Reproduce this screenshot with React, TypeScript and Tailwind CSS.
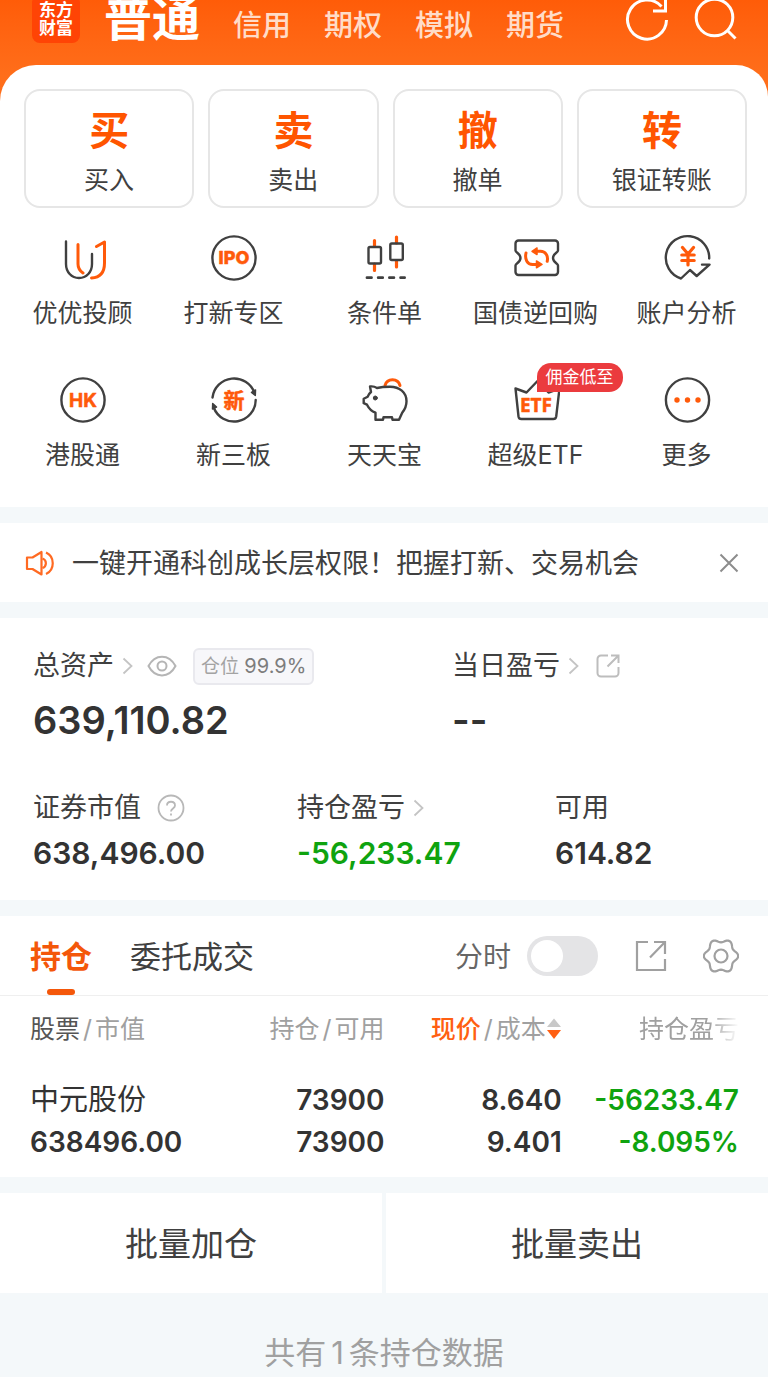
import React, { useState } from 'react';

const ORANGE = '#ff5a0a';
const DARK = '#404040';

const accountTabs = ['信用', '期权', '模拟', '期货'];

const actions = [
  { mark: '买', label: '买入' },
  { mark: '卖', label: '卖出' },
  { mark: '撤', label: '撤单' },
  { mark: '转', label: '银证转账' },
];

const holdings = [
  {
    name: '中元股份',
    marketValue: '638496.00',
    position: '73900',
    available: '73900',
    price: '8.640',
    cost: '9.401',
    profit: '-56233.47',
    profitRate: '-8.095%',
  },
];

function Icon({ children }: { children: React.ReactNode }) {
  return (
    <svg
      viewBox="0 0 48 48"
      className="size-12"
      fill="none"
      stroke={DARK}
      strokeWidth="2.4"
      strokeLinecap="round"
      strokeLinejoin="round"
      aria-hidden="true"
    >
      {children}
    </svg>
  );
}

function IconText({ y, className, children }: { y: number; className: string; children: string }) {
  return (
    <text x="24" y={y} textAnchor="middle" fill={ORANGE} stroke={ORANGE} strokeWidth="0.5" className={className}>
      {children}
    </text>
  );
}

function AdvisorIcon() {
  return (
    <Icon>
      <path d="M7 7.5V30c0 8 5.500 14 13 14s13-6 13-14V20" />
      <g stroke={ORANGE} strokeWidth="3">
        <path d="M19 10.500V30c0 4 2 7 5 9" />
        <path d="M37.500 12.500 45.500 8v21c0 9-4.500 14.500-13 15" />
      </g>
    </Icon>
  );
}

function IpoIcon() {
  return (
    <Icon>
      <circle cx="24" cy="24" r="21.600" />
      <IconText y={30} className="font-['Inter'] text-[18px] font-extrabold">IPO</IconText>
    </Icon>
  );
}

function ConditionIcon() {
  return (
    <Icon>
      <g stroke={ORANGE} strokeWidth="3.200">
        <path d="M13.500 6.500v6M13.500 30v6.500M35.500 3v6M35.500 27v6" />
      </g>
      <rect x="7.500" y="13" width="12.500" height="16.500" rx="1.500" />
      <rect x="29.300" y="9.500" width="12.500" height="16.500" rx="1.500" />
      <path d="M6 43.700h4.500M17.200 43.700h4.500M28.400 43.700h4.500M39.600 43.700h4" strokeWidth="2.800" />
    </Icon>
  );
}

function BondIcon() {
  return (
    <Icon>
      <path d="M6.500 6.500h36.500a3 3 0 0 1 3 3v7c0 2-5 3-5 7.500s5 5.500 5 7.500v6.500a3 3 0 0 1-3 3H6.500a3 3 0 0 1-3-3v-6.500c0-2 5-3 5-7.500s-5-5.500-5-7.500v-7a3 3 0 0 1 3-3z" />
      <g stroke={ORANGE} strokeWidth="3">
        <path d="M25 17.300h3.500c5 0 8 4.500 6.700 10" />
        <path d="M14 19c-1.500 6.500 1.500 11.400 6.500 11.400H24" />
        <path d="M25 14v6.600L20 17.300zM24.500 27v6.800l5.500-3.400z" fill={ORANGE} strokeWidth="1.500" />
      </g>
    </Icon>
  );
}

function AnalysisIcon() {
  return (
    <Icon>
      <path d="M46.200 24.500A21.700 21.700 0 1 0 18 44.500l9-8.500 6.700 6L46.500 30.600H39" />
      <g stroke={ORANGE} strokeWidth="3.200">
        <path d="M19.500 13.500 25 20l5.500-6.500M25 20v11M18.800 21h12.400M18.800 26.500h12.400" />
      </g>
    </Icon>
  );
}

function HkIcon() {
  return (
    <Icon>
      <circle cx="24" cy="24" r="21.600" />
      <IconText y={31} className="font-['Inter'] text-[19px] font-bold">HK</IconText>
    </Icon>
  );
}

function NewBoardIcon() {
  return (
    <Icon>
      <path d="M2.500 21.500A21.700 21.700 0 0 1 44.500 17" />
      <path d="M45.700 24A21.700 21.700 0 0 1 3.700 31.500" />
      <path d="M41.500 16.500 45.500 14l-.2 5.500zM6.500 31 2.500 33l.2-5.500z" fill={DARK} strokeWidth="1.500" />
      <IconText y={32} className="font-['Noto_Sans_CJK_SC'] text-[21px] font-bold">新</IconText>
    </Icon>
  );
}

function PiggyIcon() {
  return (
    <Icon>
      <path d="M24 9.500a7.800 7.800 0 0 1 15 0" stroke={ORANGE} strokeWidth="3" />
      <path d="M9 10.500c2.500-.3 5 .2 7 1.500 4-1 9-1.300 13-1.300 9.500 0 16.500 5.800 16.500 14.500 0 4.500-1.500 8-4.300 11.500L38 43.700h-6.500l-.5-2.500h-8.500l-.5 2.500h-7.500v-7c-4-1.500-6.500-4-8.500-8l-3.300-1.500v-4.500l4-2c.6-2 1.800-3.500 3.300-4.700z" />
      <circle cx="14.300" cy="22" r="2" fill={DARK} strokeWidth="1" />
    </Icon>
  );
}

function EtfIcon() {
  return (
    <Icon>
      <path d="M3.500 12.500 14.500 16.500 25.500 5l11 11.500 11-4-3.300 28a3 3 0 0 1-3 2.500H9.500a3 3 0 0 1-3-2.500z" />
      <IconText y={36} className="font-['Noto_Sans'] text-[19px] font-bold">ETF</IconText>
    </Icon>
  );
}

function MoreIcon() {
  return (
    <Icon>
      <circle cx="24.500" cy="24" r="21.600" />
      <g fill={ORANGE} stroke="none">
        <circle cx="14" cy="24" r="2.700" />
        <circle cx="24.500" cy="24" r="2.700" />
        <circle cx="35" cy="24" r="2.700" />
      </g>
    </Icon>
  );
}

const shortcuts = [
  { label: '优优投顾', icon: AdvisorIcon },
  { label: '打新专区', icon: IpoIcon },
  { label: '条件单', icon: ConditionIcon },
  { label: '国债逆回购', icon: BondIcon },
  { label: '账户分析', icon: AnalysisIcon },
  { label: '港股通', icon: HkIcon },
  { label: '新三板', icon: NewBoardIcon },
  { label: '天天宝', icon: PiggyIcon },
  { label: '超级ETF', icon: EtfIcon, badge: '佣金低至' },
  { label: '更多', icon: MoreIcon },
];

function Chevron() {
  return (
    <svg viewBox="0 0 12 20" className="h-5 w-3" fill="none" stroke="#c4c4c4" strokeWidth="1.800" aria-hidden="true">
      <path d="M1.500 2.500 9.500 10l-8 7.500" />
    </svg>
  );
}

// Six-lobed outline of the settings gear
const gearPath =
  Array.from({ length: 72 }, (_, i) => {
    const a = (i / 72) * Math.PI * 2;
    const r = 15.4 + 1.8 * Math.cos(6 * a);
    return `${i === 0 ? 'M' : 'L'}${(18 + r * Math.cos(a)).toFixed(2)} ${(18 + r * Math.sin(a)).toFixed(2)}`;
  }).join('') + 'Z';

function Header() {
  return (
    <header className="flex h-[65px] items-center pr-[31px] pb-7 pl-8">
      <div className="flex h-12 w-12 shrink-0 flex-col items-center justify-center rounded-lg bg-[#ff4405] text-[17px] leading-[18px] font-bold text-white">
        <span>东方</span>
        <span>财富</span>
      </div>
      <nav className="mt-1 ml-6 flex items-baseline gap-[33px] whitespace-nowrap">
        <a href="#normal" className="text-[48px] leading-10 font-bold text-white">普通</a>
        {accountTabs.map((tab) => (
          <a key={tab} href="#account" className="text-[29px] leading-8 font-medium text-[#ffdcc8]">
            {tab}
          </a>
        ))}
      </nav>
      <div className="ml-auto flex shrink-0 gap-6">
        <button type="button" aria-label="刷新">
          <svg viewBox="0 0 44 44" className="size-11" fill="none" stroke="#fff" strokeWidth="3">
            <path d="M36.500 9.500A19.500 19.500 0 1 0 41.500 23" />
            <path d="M40.500 1v13H28" />
          </svg>
        </button>
        <button type="button" aria-label="搜索">
          <svg viewBox="0 0 44 44" className="size-11" fill="none" stroke="#fff" strokeWidth="3">
            <circle cx="21.500" cy="20.500" r="18.300" />
            <path d="m34.500 33.500 8 8" />
          </svg>
        </button>
      </div>
    </header>
  );
}

function QuickPanel() {
  return (
    <section className="rounded-tl-[36px] rounded-tr-[32px] bg-white pt-6 pb-9">
      <div className="grid grid-cols-4 gap-[14px] pr-[21px] pl-6">
        {actions.map(({ mark, label }) => (
          <button
            key={mark}
            type="button"
            className="flex h-[119px] flex-col items-center rounded-2xl border-2 border-[#e6e6e6] pt-[14px]"
          >
            <span className="text-[40px] leading-[52px] font-bold text-[#ff5500]">{mark}</span>
            <span className="mt-[7px] text-[25px] leading-8">{label}</span>
          </button>
        ))}
      </div>
      <div className="mt-[26px] grid grid-cols-5 gap-y-[47px] pr-[6px] pl-[7px]">
        {shortcuts.map(({ label, icon: ShortcutIcon, badge }) => (
          <a key={label} href="#shortcut" className="flex flex-col items-center gap-[15px]">
            <span className="relative">
              <ShortcutIcon />
              {badge && (
                <span className="absolute -top-[13px] left-[25px] rounded-[14px] rounded-bl-none bg-[#eb3b3e] px-[9px] text-[17px] leading-[29px] whitespace-nowrap text-white">
                  {badge}
                </span>
              )}
            </span>
            <span className="text-[25px] leading-8 whitespace-nowrap">{label}</span>
          </a>
        ))}
      </div>
    </section>
  );
}

function Notice({ onClose }: { onClose: () => void }) {
  return (
    <section className="mt-4 flex h-[79px] items-center bg-white pr-7 pl-[25px]">
      <svg viewBox="0 0 30 26" className="h-[26px] w-[30px]" fill="none" stroke="#ff6a22" strokeWidth="2.200" strokeLinejoin="round" aria-hidden="true">
        <path d="M2 7.500h5.500L16.500 2v22.500L7.500 19H2z" />
        <path d="M17.500 8.500c4.500 1.500 4.500 8 0 9.500M21 2.500c9 4 9 17.500 0 21.500" />
      </svg>
      <p className="ml-[17px] pt-[2px] text-[27px] leading-9">一键开通科创成长层权限！把握打新、交易机会</p>
      <button type="button" aria-label="关闭" onClick={onClose} className="ml-auto">
        <svg viewBox="0 0 22 22" className="size-[22px]" fill="none" stroke="#8c8c8c" strokeWidth="2">
          <path d="m2.500 2.500 17 17M19.500 2.500l-17 17" />
        </svg>
      </button>
    </section>
  );
}

function Assets() {
  return (
    <section className="mt-4 bg-white pt-8 pb-[31px] pl-[33px]">
      <div className="grid grid-cols-[419fr_316fr]">
        <div>
          <div className="flex h-8 items-center text-[27px] leading-8">
            总资产
            <span className="ml-2"><Chevron /></span>
            <svg viewBox="0 0 30 22" className="ml-[13px] h-[22px] w-[30px]" fill="none" stroke="#b5b5b5" strokeWidth="2" aria-hidden="true">
              <path d="M1.500 11C8-1.500 22-1.500 28.500 11 22 23.500 8 23.500 1.500 11z" />
              <circle cx="15" cy="11" r="4.500" />
            </svg>
            <span className="ml-4 rounded-md border-2 border-[#e9e9ee] bg-[#f7f7fa] px-[6px] text-[19px] leading-8 whitespace-nowrap text-[#a3a3a3]">
              仓位 <span className="text-[20px] text-[#7d7d7d]">99.9%</span>
            </span>
          </div>
          <p className="mt-[18px] text-[38px] leading-10 font-semibold text-[#333]">639,110.82</p>
        </div>
        <div>
          <div className="flex h-8 items-center text-[27px] leading-8">
            当日盈亏
            <span className="ml-2"><Chevron /></span>
            <svg viewBox="0 0 24 24" className="ml-4 size-6" fill="none" stroke="#bdbdbd" strokeWidth="2" aria-hidden="true">
              <path d="M12 1.500H5a3.500 3.500 0 0 0-3.500 3.500v14A3.500 3.500 0 0 0 5 22.500h14a3.500 3.500 0 0 0 3.500-3.500v-6" />
              <path d="M15 1.500h7.500V9M22 2 11.500 12.500" />
            </svg>
          </div>
          <p className="mt-[18px] text-[38px] leading-10 font-semibold text-[#333]">--</p>
        </div>
      </div>
      <div className="mt-[52px] grid grid-cols-[264fr_258fr_213fr]">
        <div>
          <div className="flex items-center text-[27px] leading-8">
            证券市值
            <svg viewBox="0 0 28 28" className="ml-4 size-7" fill="none" stroke="#b8b8b8" strokeWidth="1.800" aria-hidden="true">
              <circle cx="14" cy="14" r="12.500" />
              <path d="M10 11.500c0-5 8-5 8 0 0 3-4 3-4 6" />
              <path d="M14 19.500v2" />
            </svg>
          </div>
          <p className="mt-[13px] text-[30px] leading-8 font-semibold text-[#333]">638,496.00</p>
        </div>
        <div>
          <div className="flex items-center text-[27px] leading-8">
            持仓盈亏
            <span className="ml-2"><Chevron /></span>
          </div>
          <p className="mt-[13px] text-[30px] leading-8 font-semibold text-[#0fa30f]">-56,233.47</p>
        </div>
        <div>
          <div className="text-[27px] leading-8">可用</div>
          <p className="mt-[13px] text-[30px] leading-8 font-semibold text-[#333]">614.82</p>
        </div>
      </div>
    </section>
  );
}

function Holdings() {
  const [tab, setTab] = useState('持仓');

  return (
    <section className="mt-4 bg-white pb-[14px]">
      <div className="flex h-20 items-stretch border-b border-[#efefef] pr-[29px] pl-[30px]">
        <div className="flex gap-[38px] text-[31px]">
          {['持仓', '委托成交'].map((name) => (
            <button
              key={name}
              type="button"
              onClick={() => setTab(name)}
              className={
                tab === name
                  ? 'relative pt-[3px] font-bold text-[#f4570a] after:absolute after:bottom-0 after:left-1/2 after:h-[6px] after:w-7 after:-translate-x-1/2 after:rounded-sm after:bg-[#f4570a]'
                  : 'relative pt-[3px]'
              }
            >
              {name}
            </button>
          ))}
        </div>
        <div className="ml-auto flex items-center">
          <label htmlFor="minute" className="pt-[2px] text-[28px] text-[#666]">分时</label>
          <input
            id="minute"
            type="checkbox"
            role="switch"
            className="ml-4 flex h-10 w-[71px] appearance-none items-center rounded-full bg-[#e4e4e6] px-1 before:size-8 before:rounded-full before:bg-white checked:justify-end checked:bg-[#ff5500]"
          />
          <button type="button" aria-label="分享" className="ml-[37px]">
            <svg viewBox="0 0 32 32" className="size-8" fill="none" stroke="#a0a0a0" strokeWidth="2.200">
              <path d="M13 2H2v28h28V19" />
              <path d="M19 2h11v12M30 2 15 17.500" />
            </svg>
          </button>
          <button type="button" aria-label="设置" className="ml-9">
            <svg viewBox="0 0 36 36" className="size-9" fill="none" stroke="#a0a0a0" strokeWidth="2.200" strokeLinejoin="round">
              <path d={gearPath} />
              <circle cx="18" cy="18" r="6.500" />
            </svg>
          </button>
        </div>
      </div>
      <div className="pr-[29px] pl-[30px]">
        <table className="w-full table-fixed text-right whitespace-nowrap">
          <thead className="text-[25px] leading-8 text-[#a0a0a0]">
            <tr className="h-[66px]">
              <th className="p-0 text-left font-normal">
                <span className="text-[#555]">股票</span>
                <span className="mx-[3px]">/</span>市值
              </th>
              <th className="p-0 font-normal">
                持仓<span className="mx-[3px]">/</span>可用
              </th>
              <th className="p-0 font-normal">
                <span className="flex items-center justify-end">
                  <span className="font-medium text-[#ff5f12]">现价</span>
                  <span className="mx-[3px]">/</span>成本
                  <svg viewBox="0 0 16 24" className="h-6 w-4" aria-hidden="true">
                    <path d="M8 1.500 15 10H1z" fill="#c8c8c8" />
                    <path d="M1 13h14l-7 9z" fill="#ff5f12" />
                  </svg>
                </span>
              </th>
              <th className="p-0 font-normal">
                <span className="mask-r-from-70% mask-r-to-100%">持仓盈亏</span>
              </th>
            </tr>
          </thead>
          <tbody className="text-[28px] leading-[42px] font-semibold text-[#333]">
            {holdings.map((h) => (
              <tr key={h.name}>
                <td className="p-0 pt-[17px] text-left">
                  <div className="text-[29px] font-normal">{h.name}</div>
                  <div>{h.marketValue}</div>
                </td>
                <td className="p-0 pt-[17px]">
                  <div>{h.position}</div>
                  <div>{h.available}</div>
                </td>
                <td className="p-0 pt-[17px]">
                  <div>{h.price}</div>
                  <div>{h.cost}</div>
                </td>
                <td className="p-0 pt-[17px] text-[#0fa30f]">
                  <div>{h.profit}</div>
                  <div>{h.profitRate}</div>
                </td>
              </tr>
            ))}
          </tbody>
        </table>
      </div>
    </section>
  );
}

export default function App() {
  const [showNotice, setShowNotice] = useState(true);

  return (
    <div className="min-h-screen bg-[#f4f8fa] font-['Inter','Noto_Sans_CJK_SC',sans-serif] text-[#404040]">
      <div className="bg-linear-to-b from-[#ff5c08] to-[#ff6e1a] to-15%">
        <Header />
        <QuickPanel />
      </div>
      {showNotice && <Notice onClose={() => setShowNotice(false)} />}
      <Assets />
      <Holdings />
      <div className="mt-4 grid grid-cols-2 gap-1 text-[33px]">
        <button type="button" className="h-[100px] bg-white pt-1">批量加仓</button>
        <button type="button" className="h-[100px] bg-white pt-1">批量卖出</button>
      </div>
      <p className="pt-[38px] pb-[2px] text-center text-[31px] leading-[44px] text-[#a0a0a0]">
        共有<span className="mx-[5px]">1</span>条持仓数据
      </p>
    </div>
  );
}
